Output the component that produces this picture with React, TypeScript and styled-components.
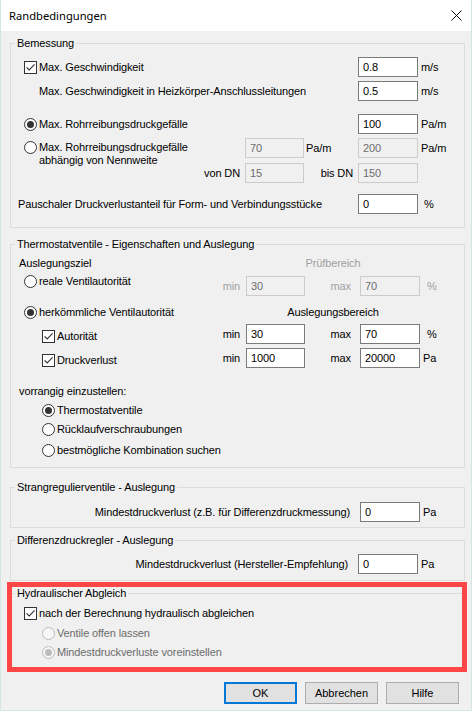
import React from "react";
import styled, { createGlobalStyle } from "styled-components";

const GlobalStyle = createGlobalStyle`
  html, body {
    margin: 0;
    padding: 0;
    background: #ffffff;
  }
  body {
    font-family: "Liberation Sans", Arial, sans-serif;
    font-size: 11px;
    letter-spacing: -0.12px;
    color: #000;
  }
`;

type Off = { $off?: boolean };

export default function App() {
  return (
    <>
      <GlobalStyle />
      <Window>
        <TitleBar>
          <Title>Randbedingungen</Title>
          <svg width="11" height="11" viewBox="0 0 11 11">
            <path d="M0.5 0.5 L10.5 10.5 M10.5 0.5 L0.5 10.5" stroke="#111" strokeWidth="1" />
          </svg>
        </TitleBar>

        <Body>
          <Group $mt={12} $pb={13}>
            <Legend>Bemessung</Legend>
            <Row $mt={13}>
              <Lead $span={4} $indent={13}>
                <Check on />
                Max. Geschwindigkeit
              </Lead>
              <Field $col={5} defaultValue="0.8" readOnly />
              <Tag $col={6} $pad={3}>m/s</Tag>
            </Row>
            <Row $mt={4}>
              <Lead $span={4} $indent={28}>
                Max. Geschwindigkeit in Heizkörper-Anschlussleitungen
              </Lead>
              <Field $col={5} defaultValue="0.5" readOnly />
              <Tag $col={6} $pad={3}>m/s</Tag>
            </Row>
            <Row $mt={13}>
              <Lead $span={4} $indent={13}>
                <Radio on />
                Max. Rohrreibungsdruckgefälle
              </Lead>
              <Field $col={5} defaultValue="100" readOnly />
              <Tag $col={6} $pad={3}>Pa/m</Tag>
            </Row>
            <Row $mt={4}>
              <Lead $indent={13} $top={3}>
                <Radio />
                <span>
                  Max. Rohrreibungsdruckgefälle
                  <br />
                  abhängig von Nennweite
                </span>
              </Lead>
              <Field $col={3} $off defaultValue="70" readOnly />
              <Tag $col={4} $pad={2}>Pa/m</Tag>
              <Field $col={5} $off defaultValue="200" readOnly />
              <Tag $col={6} $pad={3}>Pa/m</Tag>
            </Row>
            <Row $mt={5}>
              <Tag $col={2} $right $pad={5}>von DN</Tag>
              <Field $col={3} $off defaultValue="15" readOnly />
              <Tag $col={4} $right $pad={5}>bis DN</Tag>
              <Field $col={5} $off defaultValue="150" readOnly />
            </Row>
            <Row $mt={11}>
              <Lead $span={4} $indent={7}>
                Pauschaler Druckverlustanteil für Form- und Verbindungsstücke
              </Lead>
              <Field $col={5} defaultValue="0" readOnly />
              <Tag $col={6} $pad={6}>%</Tag>
            </Row>
          </Group>

          <Group $mt={16} $pb={10}>
            <Legend>Thermostatventile - Eigenschaften und Auslegung</Legend>
            <Row $alt $mt={12} $h={13}>
              <Lead $indent={8}>Auslegungsziel</Lead>
              <Caption $dim>Prüfbereich</Caption>
            </Row>
            <Row $alt $mt={6}>
              <Lead $indent={13} $top={-1}>
                <Radio />
                reale Ventilautorität
              </Lead>
              <Tag $col={2} $right $pad={6} $dim>min</Tag>
              <Field $col={3} $off defaultValue="30" readOnly />
              <Tag $col={4} $right $pad={9} $dim>max</Tag>
              <Field $col={5} $off defaultValue="70" readOnly />
              <Tag $col={6} $pad={7} $dim>%</Tag>
            </Row>
            <Row $alt $mt={10} $h={13}>
              <Lead $indent={13}>
                <Radio on />
                herkömmliche Ventilautorität
              </Lead>
              <Caption>Auslegungsbereich</Caption>
            </Row>
            <Row $alt $mt={5}>
              <Lead $indent={31} $top={6}>
                <Check on />
                Autorität
              </Lead>
              <Tag $col={2} $right $pad={6}>min</Tag>
              <Field $col={3} defaultValue="30" readOnly />
              <Tag $col={4} $right $pad={9}>max</Tag>
              <Field $col={5} defaultValue="70" readOnly />
              <Tag $col={6} $pad={7}>%</Tag>
            </Row>
            <Row $alt $mt={4}>
              <Lead $indent={31} $top={6}>
                <Check on />
                Druckverlust
              </Lead>
              <Tag $col={2} $right $pad={6}>min</Tag>
              <Field $col={3} defaultValue="1000" readOnly />
              <Tag $col={4} $right $pad={9}>max</Tag>
              <Field $col={5} defaultValue="20000" readOnly />
              <Tag $col={6} $pad={3}>Pa</Tag>
            </Row>
            <Row $alt $mt={17} $h={13}>
              <Lead $span={4} $indent={8}>vorrangig einzustellen:</Lead>
            </Row>
            <Row $alt $mt={6} $h={13}>
              <Lead $span={4} $indent={31}>
                <Radio on />
                Thermostatventile
              </Lead>
            </Row>
            <Row $alt $mt={6} $h={13}>
              <Lead $span={4} $indent={31}>
                <Radio />
                Rücklaufverschraubungen
              </Lead>
            </Row>
            <Row $alt $mt={8} $h={13}>
              <Lead $span={4} $indent={31}>
                <Radio />
                bestmögliche Kombination suchen
              </Lead>
            </Row>
          </Group>

          <Group $mt={19} $pb={5}>
            <Legend>Strangregulierventile - Auslegung</Legend>
            <Row $alt $mt={14}>
              <Lead $span={4} $right>
                Mindestdruckverlust (z.B. für Differenzdruckmessung)
              </Lead>
              <Field $col={5} defaultValue="0" readOnly />
              <Tag $col={6} $pad={3}>Pa</Tag>
            </Row>
          </Group>

          <Group $mt={12} $pb={6}>
            <Legend>Differenzdruckregler - Auslegung</Legend>
            <Row $mt={13}>
              <Lead $span={4} $right>
                Mindestdruckverlust (Hersteller-Empfehlung)
              </Lead>
              <Field $col={5} defaultValue="0" readOnly />
              <Tag $col={6} $pad={3}>Pa</Tag>
            </Row>
          </Group>

          <Group $mt={12} $pb={9}>
            <Legend>Hydraulischer Abgleich</Legend>
            <Row $mt={13} $h={13}>
              <Lead $span={6} $indent={13}>
                <Check on />
                nach der Berechnung hydraulisch abgleichen
              </Lead>
            </Row>
            <Row $mt={7} $h={13}>
              <Lead $span={6} $indent={31} $off>
                <Radio off />
                Ventile offen lassen
              </Lead>
            </Row>
            <Row $mt={6} $h={13}>
              <Lead $span={6} $indent={31} $off>
                <Radio on off />
                Mindestdruckverluste voreinstellen
              </Lead>
            </Row>
          </Group>

          <ButtonBar>
            <Button $primary>OK</Button>
            <Button>Abbrechen</Button>
            <Button>Hilfe</Button>
          </ButtonBar>
        </Body>

        <Highlight />
      </Window>
    </>
  );
}

function Check({ on, off }: { on?: boolean; off?: boolean }) {
  return (
    <Box $off={off}>
      {on && (
        <svg width="11" height="11" viewBox="0 0 11 11">
          <path
            d="M1.6 5.4 L4.2 8 L9.6 2.4"
            fill="none"
            stroke={off ? "#bcbcbc" : "#333"}
            strokeWidth="1.1"
          />
        </svg>
      )}
    </Box>
  );
}

function Radio({ on, off }: { on?: boolean; off?: boolean }) {
  return <Ring $off={off}>{on && <Dot $off={off} />}</Ring>;
}

// Dialog frame
const Window = styled.div`
  position: relative;
  width: 472px;
  height: 711px;
  box-sizing: border-box;
  display: flex;
  flex-direction: column;
  background: #f0f0f0;
  border: 1px solid #d3e6e1;
  border-top: none;
`;

const TitleBar = styled.div`
  flex: none;
  height: 31px;
  display: flex;
  align-items: center;
  justify-content: space-between;
  padding: 0 9px 0 8px;
  background: #ffffff;
`;

const Title = styled.span`
  font-family: "Noto Sans", "Liberation Sans", sans-serif;
  font-size: 11.2px;
  letter-spacing: 0;
  color: #000;
`;

const Body = styled.div`
  flex: 1;
  display: flex;
  flex-direction: column;
  padding: 0 6px 0 9px;
`;

// Group boxes
const Group = styled.section<{ $mt: number; $pb: number }>`
  position: relative;
  margin-top: ${(p) => p.$mt}px;
  padding-bottom: ${(p) => p.$pb}px;
  border: 1px solid #dcdcdc;
`;

const Legend = styled.span`
  position: absolute;
  top: -7px;
  left: 4px;
  padding: 0 2px;
  line-height: 13px;
  white-space: nowrap;
  background: #f0f0f0;
`;

// Form rows share one column grid: label, tag, input, tag, input, unit
const Row = styled.div<{ $mt: number; $h?: number; $alt?: boolean }>`
  display: grid;
  grid-template-columns: ${(p) =>
      p.$alt ? "190px 45px 59px 55px 60px" : "190px 44px 59px 54px 60px"} 1fr;
  grid-template-rows: ${(p) => p.$h ?? 20}px;
  margin-top: ${(p) => p.$mt}px;
  align-items: center;
  line-height: 13px;
  white-space: nowrap;
`;

const Lead = styled.div<{
  $span?: number;
  $indent?: number;
  $right?: boolean;
  $top?: number;
  $off?: boolean;
}>`
  grid-column: 1 / span ${(p) => p.$span ?? 1};
  grid-row: 1;
  display: flex;
  align-items: flex-start;
  gap: 2px;
  justify-content: ${(p) => (p.$right ? "flex-end" : "flex-start")};
  padding-left: ${(p) => p.$indent ?? 0}px;
  padding-right: ${(p) => (p.$right ? 10 : 0)}px;
  color: ${(p) => (p.$off ? "#6d6d6d" : "#000")};
  ${(p) => (p.$top !== undefined ? `align-self: start; margin-top: ${p.$top}px;` : "")}
`;

const Tag = styled.span<{ $col: number; $right?: boolean; $pad: number; $dim?: boolean }>`
  grid-column: ${(p) => p.$col};
  grid-row: 1;
  display: flex;
  justify-content: ${(p) => (p.$right ? "flex-end" : "flex-start")};
  ${(p) => (p.$right ? "padding-right" : "padding-left")}: ${(p) => p.$pad}px;
  color: ${(p) => (p.$dim ? "#a0a0a0" : "#000")};
`;

const Caption = styled.span<{ $dim?: boolean }>`
  grid-column: 3 / 6;
  grid-row: 1;
  text-align: center;
  color: ${(p) => (p.$dim ? "#a0a0a0" : "#000")};
`;

const Field = styled.input<{ $col: number } & Off>`
  grid-column: ${(p) => p.$col};
  grid-row: 1;
  box-sizing: border-box;
  width: 100%;
  height: 20px;
  margin: 0;
  padding: 0 4px;
  font: inherit;
  letter-spacing: inherit;
  outline: none;
  border: 1px solid ${(p) => (p.$off ? "#cccccc" : "#7a7a7a")};
  background: ${(p) => (p.$off ? "#f0f0f0" : "#ffffff")};
  color: ${(p) => (p.$off ? "#6d6d6d" : "#000")};
`;

// Check box and radio button glyphs
const Box = styled.span<Off>`
  flex: none;
  box-sizing: border-box;
  width: 13px;
  height: 13px;
  display: grid;
  place-items: center;
  border: 1px solid ${(p) => (p.$off ? "#bcbcbc" : "#333333")};
  background: ${(p) => (p.$off ? "#f7f7f7" : "#ffffff")};
`;

const Ring = styled(Box)`
  border-radius: 50%;
`;

const Dot = styled.span<Off>`
  width: 7px;
  height: 7px;
  border-radius: 50%;
  background: ${(p) => (p.$off ? "#bcbcbc" : "#333333")};
`;

// Dialog buttons
const ButtonBar = styled.div`
  display: flex;
  justify-content: flex-end;
  gap: 8px;
  margin-top: 13px;
  padding-right: 6px;
`;

const Button = styled.button<{ $primary?: boolean }>`
  box-sizing: border-box;
  width: 73px;
  height: 22px;
  padding: 0;
  font: inherit;
  letter-spacing: 0;
  color: #000;
  background: #e1e1e1;
  border: ${(p) => (p.$primary ? "2px solid #0078d7" : "1px solid #adadad")};
`;

// Red marker frame drawn over the hydraulic balancing group
const Highlight = styled.div`
  position: absolute;
  left: 6px;
  top: 582px;
  width: 460px;
  height: 90px;
  box-sizing: border-box;
  border: 5px solid #ff4646;
  pointer-events: none;
`;
